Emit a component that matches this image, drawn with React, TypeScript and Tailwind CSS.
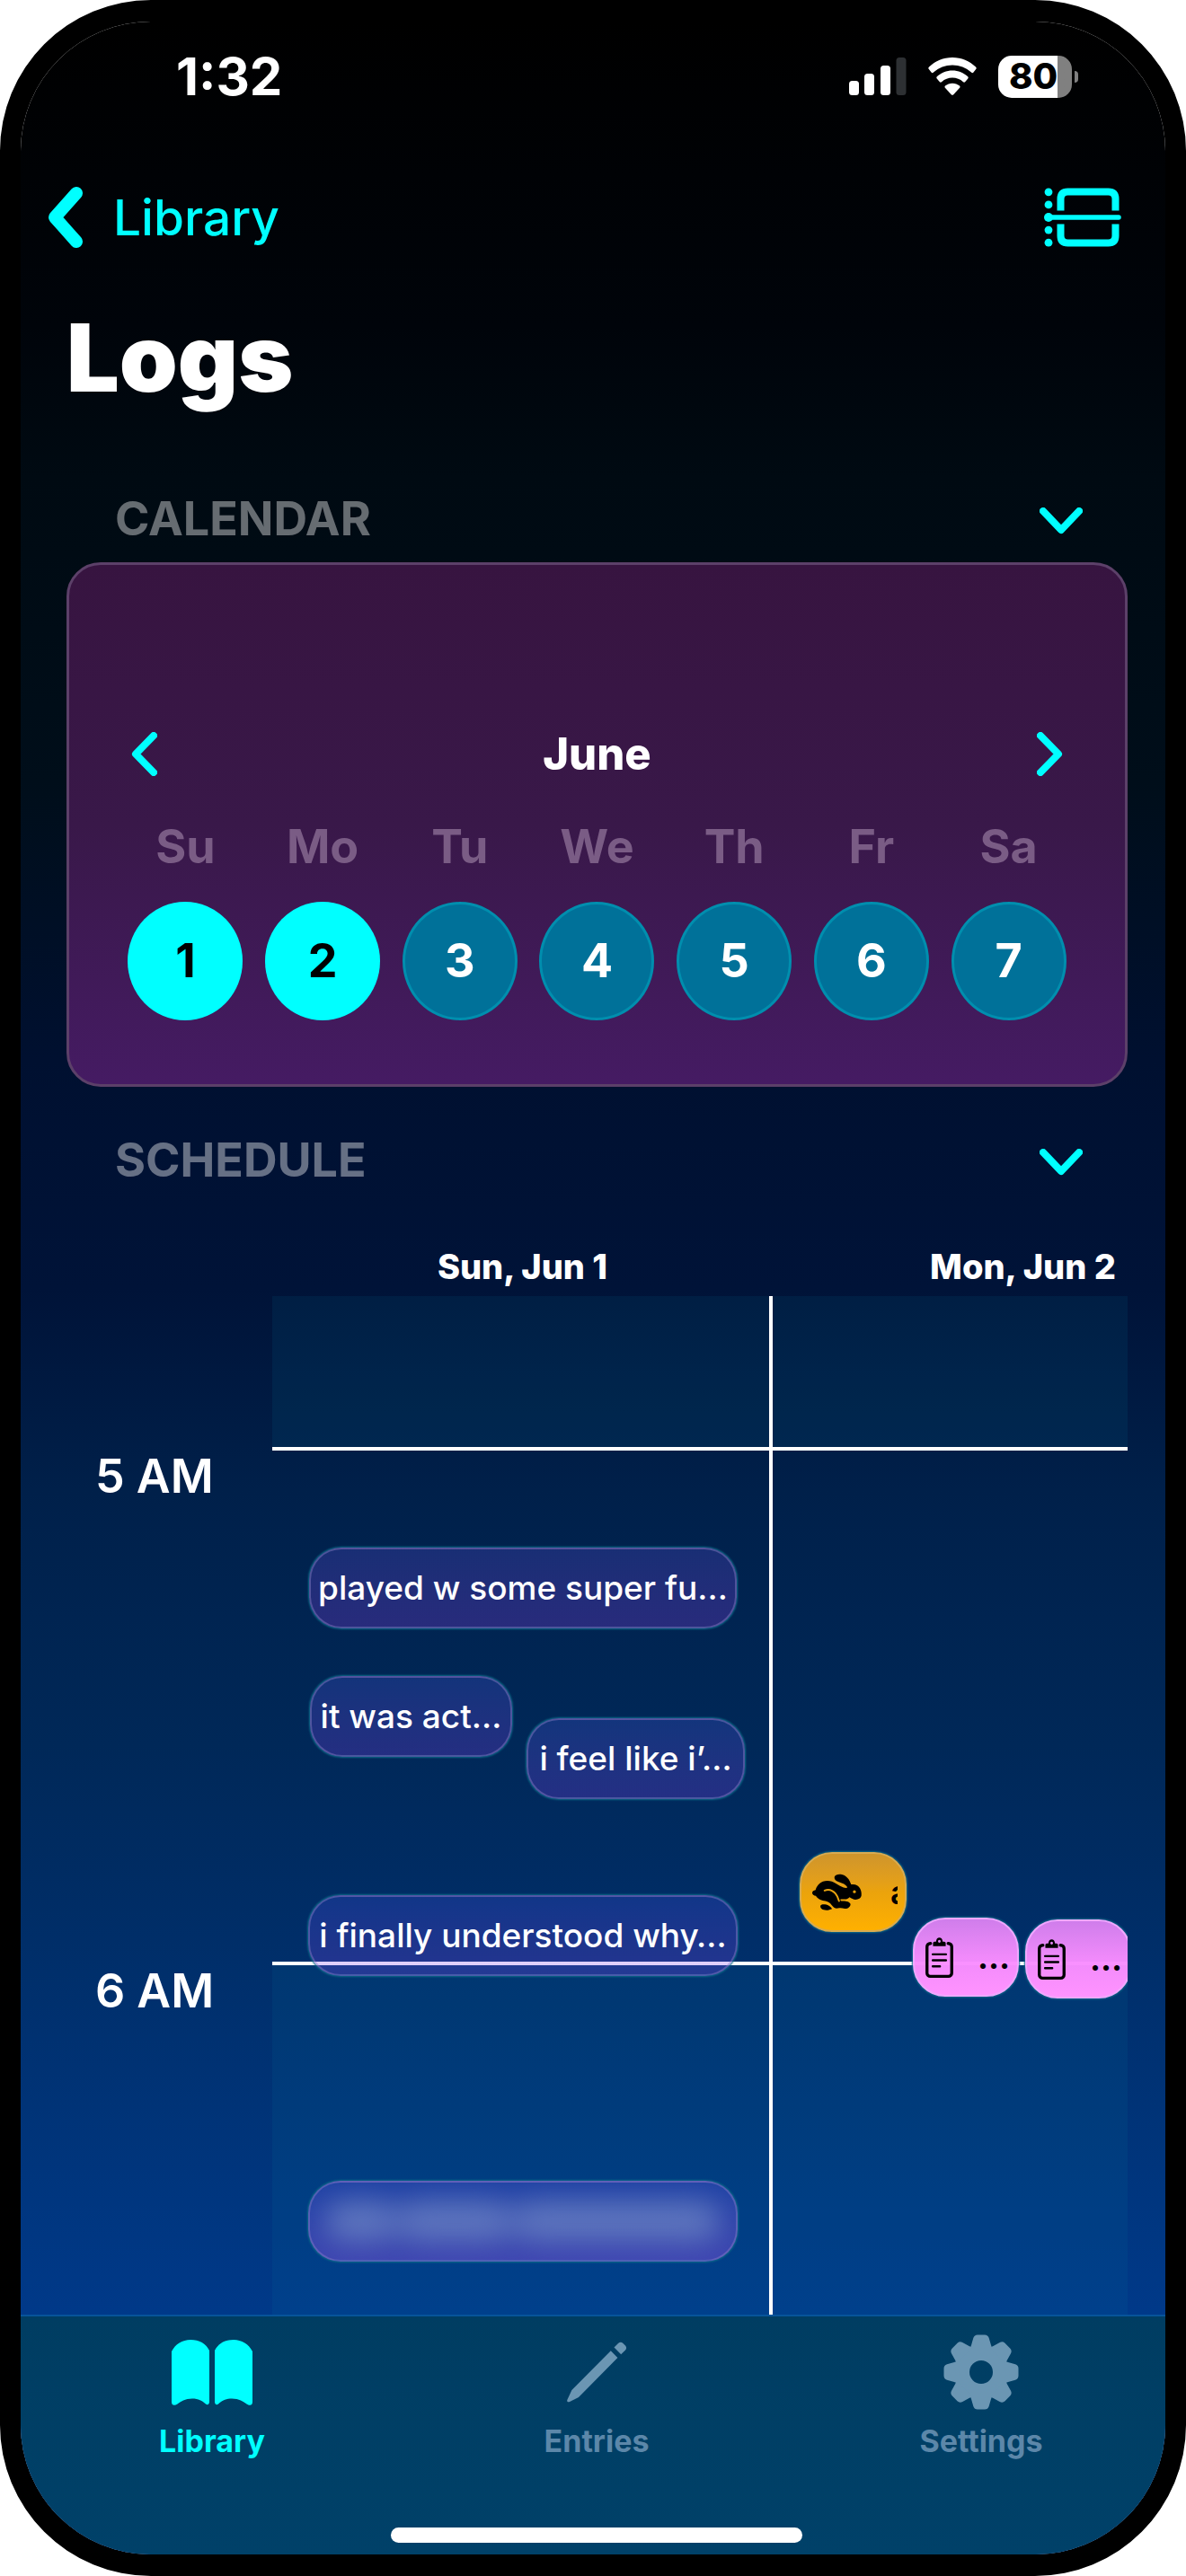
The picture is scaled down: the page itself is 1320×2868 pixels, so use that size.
import type { ReactNode } from "react";

type ChevronProps = { className: string; points: string; box: string; stroke: number };

function Chevron({ className, points, box, stroke }: ChevronProps) {
  return (
    <svg className={className} viewBox={box} fill="none" stroke="currentColor" strokeWidth={stroke} strokeLinecap="round" strokeLinejoin="round" aria-hidden="true">
      <polyline points={points} />
    </svg>
  );
}

function SignalIcon() {
  return (
    <svg className="h-[42px] w-16" viewBox="0 0 64 42" fill="white" aria-hidden="true">
      <rect x="0" y="26" width="11" height="16" rx="3.5" />
      <rect x="17" y="18" width="11" height="24" rx="3.5" />
      <rect x="35" y="9" width="11" height="33" rx="3.5" />
      <rect x="52.500" y="0" width="11" height="42" rx="3.5" fill="#2d3033" />
    </svg>
  );
}

function WifiIcon() {
  return (
    <svg className="h-[42px] w-[54px]" viewBox="0 0 54 42" fill="white" aria-hidden="true">
      <path d="M27 0C37 0 46 4 53 10.500Q54.300 12 53.200 13L50.500 16.500Q49.300 17.800 48 16.600C42 11.500 35 8.600 27 8.600S12 11.500 6 16.600Q4.700 17.800 3.500 16.500L.8 13Q-.3 12 1 10.500C8 4 17 0 27 0Z" />
      <path d="M27 14.500C33.500 14.500 39.500 17 44.200 21.300Q45.300 22.400 44.300 23.500L41.300 27Q40.200 28.200 39 27.200C35.500 24.200 31.500 22.600 27 22.600S18.500 24.200 15 27.200Q13.800 28.200 12.700 27L9.700 23.500Q8.700 22.400 9.800 21.300C14.500 17 20.500 14.500 27 14.500Z" />
      <path d="M27 28.700C30 28.700 32.800 29.800 35 31.600Q36 32.600 35.100 33.700L28.300 41.200Q27 42.500 25.700 41.200L18.900 33.700Q18 32.600 19 31.600C21.200 29.800 24 28.700 27 28.700Z" />
    </svg>
  );
}

function Battery() {
  return (
    <div className="flex items-center gap-[3px]">
      <div className="flex h-[47px] w-[82px] items-center justify-center rounded-[15px] bg-linear-to-r from-white from-80% to-[#808080] to-80% pr-1 text-[40px] leading-none font-extrabold text-black">
        80
      </div>
      <div className="h-[13px] w-1 rounded-r-full bg-[#808080]" />
    </div>
  );
}

function SplitViewIcon() {
  return (
    <svg className="h-[66px] w-[86px]" viewBox="0 0 86 66" fill="none" stroke="currentColor" aria-hidden="true">
      <g fill="currentColor" stroke="none">
        <circle cx="5" cy="4.800" r="4.400" />
        <circle cx="5" cy="18.900" r="4.400" />
        <circle cx="5" cy="33" r="5" />
        <circle cx="5" cy="47.100" r="4.400" />
        <circle cx="5" cy="61.200" r="4.400" />
      </g>
      <path d="M5 33H83" strokeWidth="5.500" strokeLinecap="round" />
      <path d="M18.500 25.500V12.500Q18.500 4.500 26.500 4.500H71.500Q79.500 4.500 79.500 12.500V25.500" strokeWidth="8" />
      <path d="M18.500 40.500V53.500Q18.500 61.500 26.500 61.500H71.500Q79.500 61.500 79.500 53.500V40.500" strokeWidth="8" />
    </svg>
  );
}

function RabbitIcon() {
  return (
    <svg className="h-[41px] w-[55px] shrink-0" viewBox="0 0 164 122" aria-hidden="true">
      <path
        fill="black"
        fillRule="evenodd"
        d="M0 64C0 58 5 55 11 54C16 38 29 24 50 24C72 24 86 40 104 46C110 48 115 48 117 45C112 36 100 31 90 28C80 25 72 19 74 10C77 3 85 1 95 2C112 4 125 20 129 36C142 34 154 38 159 50C163 58 164 66 163 74C161 82 154 86 144 86C136 86 130 82 124 78C119 82 115 85 108 85H94C93 88 94 90 97 91C112 90 124 93 127 101C127 110 118 117 108 116C100 115 94 113 86 115C76 117 70 111 65 105C60 98 54 93 44 91C32 90 20 86 12 74C6 73 0 70 0 64ZM140 55A5 5 0 1 0 140 65A5 5 0 1 0 140 55Z"
      />
      <path fill="black" d="M27 108C28 101 38 101 47 103C55 105 61 110 66 117C58 121 46 123 38 120C31 118 27 114 27 108Z" />
      <path d="M41 56C56 50 68 56 77 66C83 73 86 80 89 91" fill="none" stroke="#eaa30e" strokeWidth="6" strokeLinecap="round" />
    </svg>
  );
}

function ClipboardIcon() {
  return (
    <svg className="h-[45px] w-[31px] shrink-0" viewBox="0 0 92 134" fill="none" stroke="black" strokeLinecap="round" aria-hidden="true">
      <path d="M17 20H16A11 11 0 0 0 5 31V118A11 11 0 0 0 16 129H76A11 11 0 0 0 87 118V31A11 11 0 0 0 76 20H75" strokeWidth="10" />
      <path fill="black" stroke="none" fillRule="evenodd" d="M25 29V19Q25 14 30 14H35C36 5 40 1 46 1S56 5 57 14H62Q67 14 67 19V29ZM46 8.500A4.500 4.500 0 1 0 46 17.500A4.500 4.500 0 1 0 46 8.500Z" />
      <path d="M24 56H68M24 76H68M24 96H48" strokeWidth="7" />
    </svg>
  );
}

function BookIcon() {
  const page = "M0 13C4 5 12 0 21 0C31 0 38 4 42 12V69C42 72 40 73 38 71.500C34 68 30 65.500 23 65.500C15 65.500 10 69 6.500 71.500C3 74 0 73 0 69Z";
  return (
    <svg className="h-[73px] w-[90px]" viewBox="0 0 90 73" fill="currentColor" aria-hidden="true">
      <path d={page} />
      <path d={page} transform="matrix(-1 0 0 1 90 0)" />
    </svg>
  );
}

function PencilIcon() {
  return (
    <svg className="h-[68px] w-[67px]" viewBox="0 0 67 68" fill="currentColor" aria-hidden="true">
      <path d="M5.400 54L48.800 10.300L56.400 18L13 62L3 67C1 68 -.5 66.500 .5 64.500Z" />
      <path d="M52.500 6.500L57 2Q59.800 -.5 62.500 2L65 4.500Q67.300 7 64.800 9.800L60.200 14.200Z" />
    </svg>
  );
}

function GearIcon() {
  return (
    <svg className="h-[84px] w-[84px]" viewBox="-42 -42 84 84" fill="currentColor" aria-hidden="true">
      <circle r="21" fill="none" stroke="currentColor" strokeWidth="16" />
      {[0, 45, 90, 135, 180, 225, 270, 315].map((angle) => (
        <path key={angle} transform={`rotate(${angle})`} d="M-12.500 -26L-11 -30L-8.700 -38Q-7.500 -41.500 -4 -41.500H4Q7.500 -41.500 8.700 -38L11 -30L12.500 -26Z" />
      ))}
    </svg>
  );
}

function SectionHeader({ title, className }: { title: string; className: string }) {
  return (
    <div className={`flex h-20 items-center justify-between pr-[50px] pl-[54px] ${className}`}>
      <h2 className="text-[52px] leading-none font-bold text-white/40">{title}</h2>
      <button type="button" aria-label={`Collapse ${title.toLowerCase()}`} className="pt-1 text-[#00ffff]">
        <Chevron className="h-[30px] w-12" box="0 0 48 30" points="4,4 24,25 44,4" stroke={8} />
      </button>
    </div>
  );
}

const days = [
  { name: "Su", date: 1, active: true },
  { name: "Mo", date: 2, active: true },
  { name: "Tu", date: 3, active: false },
  { name: "We", date: 4, active: false },
  { name: "Th", date: 5, active: false },
  { name: "Fr", date: 6, active: false },
  { name: "Sa", date: 7, active: false },
];

function CalendarCard() {
  return (
    <section className="mt-2 rounded-[38px] border-3 border-[#5c4069] bg-linear-to-b from-[#371440] via-[#391849] to-[#451b63] px-[53px] pt-[178px] pb-[71px]">
      <div className="flex h-16 items-center justify-between px-4 text-[#00ffff]">
        <button type="button" aria-label="Previous month">
          <Chevron className="h-[49px] w-[29px]" box="0 0 29 49" points="25,4 5,24.500 25,45" stroke={8} />
        </button>
        <h3 className="text-[49px] leading-none font-extrabold text-white">June</h3>
        <button type="button" aria-label="Next month">
          <Chevron className="h-[49px] w-[29px]" box="0 0 29 49" points="4,4 24,24.500 4,45" stroke={8} />
        </button>
      </div>
      <div className="mt-10 grid grid-cols-7 justify-items-center gap-y-[29px]">
        {days.map((day) => (
          <div key={day.name} className="text-[52px] leading-16 font-bold text-[#7a5c85]">
            {day.name}
          </div>
        ))}
        {days.map((day) => (
          <button
            key={day.date}
            type="button"
            aria-pressed={day.active}
            className={
              day.active
                ? "h-[132px] w-32 rounded-[50%] bg-[#00ffff] text-[52px] font-bold text-black"
                : "h-[132px] w-32 rounded-[50%] border-3 border-[#008eae] bg-[#007199] text-[52px] font-bold text-white"
            }
          >
            {day.date}
          </button>
        ))}
      </div>
    </section>
  );
}

function NoteEvent({ place, children }: { place: string; children: ReactNode }) {
  return (
    <button
      type="button"
      className={`absolute flex h-[90px] items-center justify-center rounded-[36px] border-2 border-[#8c82c8]/45 text-[37px] font-medium whitespace-nowrap text-white shadow-[0_0_2px_1px_#0a6a88] ${place}`}
    >
      {children}
    </button>
  );
}

function TaskEvent({ place }: { place: string }) {
  return (
    <button
      type="button"
      aria-label="Task"
      className={`absolute flex h-[88px] w-[118px] items-center justify-between rounded-[36px] border-2 border-[#f0a8ff] bg-linear-to-b from-[#d680ef]/97 via-[#f88dff]/97 to-[#ff93ff] pr-2 pl-3 text-[36px] font-bold text-black shadow-[0_0_2px_1px_#0a6a88] ${place}`}
    >
      <ClipboardIcon />
      <span className="leading-none">…</span>
    </button>
  );
}

function Schedule() {
  return (
    <section className="flex flex-1 flex-col">
      <div className="flex overflow-hidden pt-[50px] pb-[5px] pl-[229px] text-[38px] leading-14 font-extrabold text-white">
        <div className="w-[557px] shrink-0 text-center">Sun, Jun 1</div>
        <div className="w-[557px] shrink-0 text-center">Mon, Jun 2</div>
      </div>
      <div className="flex flex-1">
        <div className="flex w-[229px] flex-col pl-8 text-[52px] font-semibold text-white">
          <div className="h-[168px]" />
          <div className="h-[573px] leading-[66px]">5 AM</div>
          <div className="leading-[66px]">6 AM</div>
        </div>
        <div className="relative flex flex-1 flex-col overflow-hidden">
          <div className="h-[168px] bg-[#007ca8]/11" />
          <div className="h-[573px] border-t-4 border-white" />
          <div className="flex-1 border-t-4 border-white bg-[#007ca8]/11" />
          <div className="absolute inset-0 flex">
            <div className="relative w-[557px] shrink-0 border-r-4 border-white">
              <NoteEvent place="left-[41px] top-[280px] w-[476px] bg-linear-to-b from-[#5850dc]/28 to-[#a041ff]/25">played w some super fu…</NoteEvent>
              <NoteEvent place="left-[42px] top-[423px] w-[225px] bg-linear-to-b from-[#4458e0]/28 to-[#9041ff]/25">it was act…</NoteEvent>
              <NoteEvent place="left-[283px] top-[470px] w-[243px] bg-linear-to-b from-[#4458e0]/28 to-[#9041ff]/25">i feel like i’…</NoteEvent>
              <NoteEvent place="left-[40px] top-[667px] w-[478px] bg-linear-to-b from-[#3c50e6]/28 to-[#9041ff]/25">i finally understood why…</NoteEvent>
              <NoteEvent place="left-[40px] top-[985px] w-[478px] overflow-hidden bg-linear-to-b from-[#5a4ee6]/35 to-[#9a50f0]/40">
                <span className="flex h-11 w-[440px] blur-[16px]" aria-label="Hidden note">
                  <span className="w-20 rounded-full bg-[#7f98cc]/60" />
                  <span className="w-32 rounded-full bg-[#7f98cc]/60" />
                  <span className="flex-1 rounded-full bg-[#7f98cc]/60" />
                </span>
              </NoteEvent>
            </div>
            <div className="relative w-[557px] shrink-0">
              <button
                type="button"
                aria-label="Activity"
                className="absolute top-[619px] left-[30px] flex h-[89px] w-[119px] items-center justify-between rounded-[36px] border-2 border-[#d8ab52] bg-linear-to-b from-[#cf952b] via-[#eba30c] to-[#ffb000] pr-2 pl-3 text-[36px] font-semibold text-black shadow-[0_0_2px_1px_#0a6a88]"
              >
                <RabbitIcon />
                <span className="w-2 overflow-hidden text-left">a</span>
              </button>
              <TaskEvent place="left-[156px] top-[692px]" />
              <TaskEvent place="left-[281px] top-[694px]" />
            </div>
          </div>
        </div>
      </div>
    </section>
  );
}

function Tab({ label, icon, active = false }: { label: string; icon: ReactNode; active?: boolean }) {
  return (
    <a
      href="#"
      aria-current={active ? "page" : undefined}
      className={active ? "flex w-[140px] flex-col items-center gap-3 text-[#00ffff]" : "flex w-[140px] flex-col items-center gap-3 text-[#6b96b3]"}
    >
      <span className="flex h-[84px] items-center">{icon}</span>
      <span className={active ? "text-[34px] leading-[46px] font-bold" : "text-[34px] leading-[46px] font-bold text-[#5c87a9]"}>{label}</span>
    </a>
  );
}

export default function App() {
  return (
    <div className="min-h-screen bg-white font-['Inter',sans-serif]">
      <div className="flex min-h-screen flex-col overflow-hidden rounded-[168px] border-x-[23px] border-y-[24px] border-black bg-black">
        <div className="flex flex-1 flex-col bg-[linear-gradient(to_bottom,#000000_0%,#00040a_12%,#000a12_18%,#000e1a_30%,#001030_41%,#001338_50%,#00204a_58%,#002858_68%,#002f6b_77%,#00367f_86%,#003a8c_92%)]">
          <div className="flex h-[122px] items-center justify-between pr-[97px] pl-[173px] text-white">
            <time className="text-[58px] leading-none font-bold">1:32</time>
            <div className="flex items-center gap-6">
              <SignalIcon />
              <WifiIcon />
              <Battery />
            </div>
          </div>
          <nav className="flex h-48 items-center justify-between pr-[49px] pl-[30px] text-[#00ffff]">
            <a href="#" className="flex items-center gap-[34px]">
              <Chevron className="h-[68px] w-[39px]" box="0 0 39 68" points="32,7 8,34 32,61" stroke={14} />
              <span className="text-[55px] leading-none font-medium">Library</span>
            </a>
            <button type="button" aria-label="Change layout">
              <SplitViewIcon />
            </button>
          </nav>
          <main className="flex flex-1 flex-col pr-[42px] pl-[51px]">
            <h1 className="text-[104px] leading-[120px] font-black text-white">Logs</h1>
            <SectionHeader title="CALENDAR" className="mt-20" />
            <CalendarCard />
            <SectionHeader title="SCHEDULE" className="mt-[42px]" />
            <Schedule />
          </main>
          <footer className="flex h-[267px] flex-col justify-between border-t-2 border-[#07549a] bg-linear-to-b from-[#003d62] to-[#004169] pt-5 pb-[13px]">
            <nav className="flex justify-between pr-[135px] pl-[143px]">
              <Tab label="Library" icon={<BookIcon />} active />
              <Tab label="Entries" icon={<PencilIcon />} />
              <Tab label="Settings" icon={<GearIcon />} />
            </nav>
            <div className="flex justify-center pl-2">
              <div className="h-[17px] w-[458px] rounded-full bg-white" />
            </div>
          </footer>
        </div>
      </div>
    </div>
  );
}
